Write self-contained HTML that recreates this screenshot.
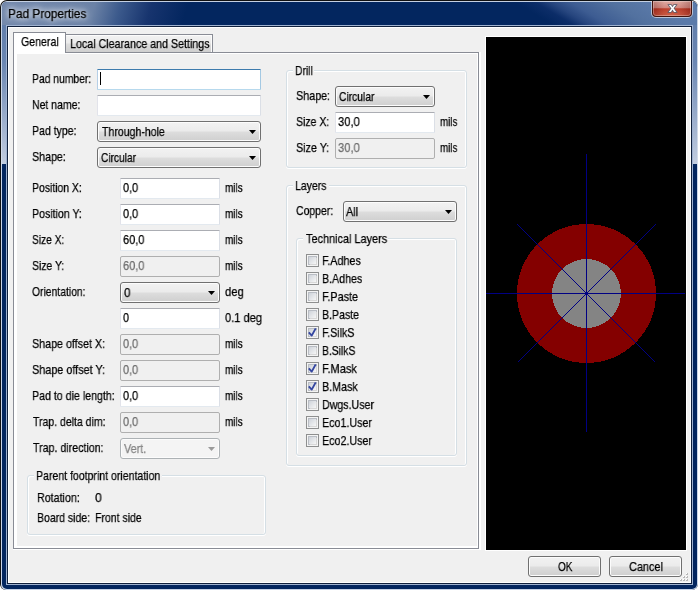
<!DOCTYPE html><html><head><meta charset="utf-8"><title>Pad Properties</title><style>
*{box-sizing:border-box;margin:0;padding:0}
html,body{width:699px;height:591px;overflow:hidden;background:#fff}
body{position:relative;font-family:"Liberation Sans",sans-serif;font-size:13px;color:#000}
.a{position:absolute}
.t{position:absolute;white-space:nowrap;line-height:15px;height:15px;transform-origin:0 0;will-change:transform;-webkit-text-stroke:0.25px}
.inp{position:absolute;height:21px;background:#fff;border:1px solid #abadb3;border-color:#abadb3 #dbdfe6 #e3e9ef #e2e3ea;border-radius:1px}
.inp.dis{background:#f0f0f0;border-color:#afafaf;border-radius:2px}
.inp.foc{border-color:#3d7bad #a4c9e3 #b7d9ed #b5cfe7}
.cmb{position:absolute;height:21px;border:1px solid #707070;border-radius:3px;background:linear-gradient(#f2f2f2 0,#ebebeb 48%,#dddddd 52%,#cfcfcf 100%);box-shadow:inset 0 0 0 1px #fcfcfc}
.cmb:after{content:"";position:absolute;right:4px;top:8px;width:7px;height:4px;background:#000;clip-path:polygon(0 0,100% 0,50% 100%)}
.cmb.dis{border-color:#adb2b5;background:#f4f4f4}
.cmb.dis:after{background:#9a9a9a}
.grp{position:absolute;border:1px solid #d5dfe5;border-radius:3px;box-shadow:inset 1px 1px 0 0 #fff,inset -1px 0 0 0 #fff,0 1px 0 0 #fff}
.gl{position:absolute;background:#f0f0f0;height:13px}
.cb{position:absolute;width:13px;height:13px;border:1px solid #8e8f8f;background:#f4f4f4;box-shadow:inset 0 0 0 1px #f4f4f4, inset 1px 1px 0 2px #b9bdc4, inset -1px -1px 0 2px #d8d8d8;}
.cb i{position:absolute;left:2px;top:2px;width:7px;height:7px;background:linear-gradient(135deg,#cfd3da,#f6f6f6)}
.btn{position:absolute;height:21px;border:1px solid #707070;border-radius:3px;background:linear-gradient(#f2f2f2 0,#ebebeb 48%,#dddddd 52%,#cfcfcf 100%);box-shadow:inset 0 0 0 1px #fcfcfc}
</style></head><body>
<div class="a" style="left:0;top:0;width:698px;height:590px;border-radius:7px 7px 6px 6px;background:#111"></div>
<div class="a" style="left:1px;top:1px;width:697px;height:589px;border-radius:6px 6px 6px 5px;background:linear-gradient(180deg,#c4d0e2 0,#d4dcea 164px,#c8d4e8 165px)"></div>
<div class="a" style="left:2px;top:2px;width:695px;height:587px;border-radius:5px;overflow:hidden;background:#03265f"><div class="a" style="left:0;top:0;width:695px;height:162px;background:linear-gradient(180deg,#5d7aa8 0,#6a86b2 60px,#c2cde0 162px)"></div><div class="a" style="left:0;top:0;width:695px;height:23px;background:linear-gradient(105deg,#7489ac 0,#6b82a6 90px,#3c5a8c 115px,#17346e 145px,#03265f 180px,#03265f 100%)"></div><div class="a" style="left:408px;top:0;width:400px;height:23px;transform-origin:0 0;transform:skewX(59deg);background:linear-gradient(90deg,rgba(3,38,95,0) 0,#03265f 40px,#03265f 105px,#0c2d68 125px,#26457e 140px,#3d5c92 160px,#52719f 200px,#5b7aa9 240px,#5b7aa9 100%)"></div></div>
<div class="t" style="left:8.1px;top:6px;transform:scaleX(0.9105);text-shadow:0 0 5px rgba(255,255,255,.9),0 0 9px rgba(255,255,255,.8),0 0 12px rgba(255,255,255,.6)">Pad Properties</div>
<div class="a" style="left:651px;top:1px;width:42px;height:17px;border-radius:0 0 5px 5px;background:rgba(255,255,255,.55)"></div>
<div class="a" style="left:652px;top:1px;width:40px;height:16px;border:1px solid #43120c;border-top:none;border-radius:0 0 4px 4px;background:radial-gradient(ellipse 60% 70% at 50% 100%,rgba(230,130,100,.55) 0,rgba(230,130,100,0) 100%),linear-gradient(90deg,rgba(80,10,5,.25) 0,rgba(80,10,5,0) 30%,rgba(80,10,5,0) 70%,rgba(80,10,5,.25) 100%),linear-gradient(#dfaaa2 0,#d08880 45%,#b53423 52%,#b43c2a 100%);box-shadow:inset 0 0 0 1px rgba(255,255,255,.3)"></div>
<div class="a" style="left:666.5px;top:-1.5px;width:11px;text-align:center;font-size:13px;font-weight:bold;line-height:18px;height:18px;color:#fff;-webkit-text-stroke:1.6px #5a5f6e;paint-order:stroke fill;will-change:transform;transform:scaleX(1.04)">x</div>
<div class="a" style="left:6px;top:25px;width:687px;height:560px;background:#9fb2d0"></div>
<div class="a" style="left:7px;top:26px;width:685px;height:558px;background:#10203c"></div>
<div class="a" style="left:8px;top:27px;width:683px;height:556px;background:#f0f0f0;border:1px solid #fff"></div>
<div class="a" style="left:13px;top:52px;width:468px;height:498px;background:#fff"></div>
<div class="a" style="left:13px;top:52px;width:466px;height:497px;border:1px solid #898c95;background:#fff"></div>
<div class="a" style="left:17px;top:54px;width:460px;height:492px;background:#f0f0f0"></div>
<div class="a" style="left:66px;top:34px;width:147px;height:18px;border:1px solid #898c95;border-left:none;border-bottom:none;background:linear-gradient(#f2f2f2 0,#ebebeb 48%,#dddddd 52%,#cfcfcf 100%);box-shadow:inset -1px 1px 0 0 #fcfcfc"></div>
<div class="t" style="left:69.9px;top:36px;transform:scaleX(0.8219);">Local Clearance and Settings</div>
<div class="a" style="left:13px;top:32px;width:53px;height:21px;border:1px solid #898c95;border-bottom:none;background:#fff"></div>
<div class="t" style="left:21.1px;top:34px;transform:scaleX(0.8151);">General</div>
<div class="t" style="left:32.2px;top:71px;transform:scaleX(0.7953);">Pad number:</div>
<div class="inp foc" style="left:97px;top:69px;width:164px"></div>
<div class="a" style="left:100px;top:72px;width:1px;height:13px;background:#000"></div>
<div class="t" style="left:32.2px;top:97px;transform:scaleX(0.8069);">Net name:</div>
<div class="inp " style="left:97px;top:95px;width:164px"></div>
<div class="t" style="left:32.2px;top:123px;transform:scaleX(0.8109);">Pad type:</div>
<div class="cmb " style="left:97px;top:121px;width:164px"></div>
<div class="t" style="left:102px;top:124px;transform:scaleX(0.8115);">Through-hole</div>
<div class="t" style="left:32.2px;top:149px;transform:scaleX(0.8203);">Shape:</div>
<div class="cmb " style="left:97px;top:147px;width:164px"></div>
<div class="t" style="left:101.25px;top:150px;transform:scaleX(0.7813);">Circular</div>
<div class="t" style="left:32px;top:180px;transform:scaleX(0.8012);">Position X:</div>
<div class="inp " style="left:120px;top:178px;width:100px"></div>
<div class="t" style="left:123.25px;top:180px;transform:scaleX(0.8436);">0,0</div>
<div class="t" style="left:224.9px;top:180px;transform:scaleX(0.7659);">mils</div>
<div class="t" style="left:32px;top:206px;transform:scaleX(0.8137);">Position Y:</div>
<div class="inp " style="left:120px;top:204px;width:100px"></div>
<div class="t" style="left:123.25px;top:206px;transform:scaleX(0.8436);">0,0</div>
<div class="t" style="left:224.9px;top:206px;transform:scaleX(0.7659);">mils</div>
<div class="t" style="left:32px;top:232px;transform:scaleX(0.7842);">Size X:</div>
<div class="inp " style="left:120px;top:230px;width:100px"></div>
<div class="t" style="left:123.25px;top:232px;transform:scaleX(0.8494);">60,0</div>
<div class="t" style="left:224.9px;top:232px;transform:scaleX(0.7659);">mils</div>
<div class="t" style="left:32px;top:258px;transform:scaleX(0.8028);">Size Y:</div>
<div class="inp dis" style="left:120px;top:256px;width:100px"></div>
<div class="t" style="left:123.25px;top:258px;transform:scaleX(0.8494);color:#6d6d6d;">60,0</div>
<div class="t" style="left:224.9px;top:258px;transform:scaleX(0.7659);">mils</div>
<div class="t" style="left:32px;top:284px;transform:scaleX(0.7961);">Orientation:</div>
<div class="cmb " style="left:120px;top:282px;width:100px"></div>
<div class="t" style="left:124px;top:285px;transform:scaleX(0.8985);">0</div>
<div class="t" style="left:224.9px;top:284px;transform:scaleX(0.8662);">deg</div>
<div class="inp " style="left:120px;top:308px;width:100px"></div>
<div class="t" style="left:123.25px;top:310px;transform:scaleX(0.8294);">0</div>
<div class="t" style="left:224.9px;top:310px;transform:scaleX(0.8507);">0.1 deg</div>
<div class="t" style="left:32px;top:336px;transform:scaleX(0.8233);">Shape offset X:</div>
<div class="inp dis" style="left:120px;top:334px;width:100px"></div>
<div class="t" style="left:123.25px;top:336px;transform:scaleX(0.8436);color:#6d6d6d;">0,0</div>
<div class="t" style="left:224.9px;top:336px;transform:scaleX(0.7659);">mils</div>
<div class="t" style="left:32px;top:362px;transform:scaleX(0.8322);">Shape offset Y:</div>
<div class="inp dis" style="left:120px;top:360px;width:100px"></div>
<div class="t" style="left:123.25px;top:362px;transform:scaleX(0.8436);color:#6d6d6d;">0,0</div>
<div class="t" style="left:224.9px;top:362px;transform:scaleX(0.7659);">mils</div>
<div class="t" style="left:32px;top:388px;transform:scaleX(0.8177);">Pad to die length:</div>
<div class="inp " style="left:120px;top:386px;width:100px"></div>
<div class="t" style="left:123.25px;top:388px;transform:scaleX(0.8436);">0,0</div>
<div class="t" style="left:224.9px;top:388px;transform:scaleX(0.7659);">mils</div>
<div class="t" style="left:32.5px;top:414px;transform:scaleX(0.8070);">Trap. delta dim:</div>
<div class="inp dis" style="left:120px;top:412px;width:100px"></div>
<div class="t" style="left:123.25px;top:414px;transform:scaleX(0.8436);color:#6d6d6d;">0,0</div>
<div class="t" style="left:224.9px;top:414px;transform:scaleX(0.7659);">mils</div>
<div class="t" style="left:32.5px;top:440px;transform:scaleX(0.8175);">Trap. direction:</div>
<div class="cmb dis" style="left:120px;top:438px;width:100px"></div>
<div class="t" style="left:123.75px;top:441px;transform:scaleX(0.8318);color:#838383;">Vert.</div>
<div class="grp" style="left:27px;top:475px;width:239px;height:60px"></div>
<div class="gl" style="left:34px;top:469px;width:128px"></div>
<div class="t" style="left:36.25px;top:468px;transform:scaleX(0.8109);">Parent footprint orientation</div>
<div class="t" style="left:37px;top:490px;transform:scaleX(0.8214);">Rotation:</div>
<div class="t" style="left:95px;top:490px;transform:scaleX(0.9330);">0</div>
<div class="t" style="left:37px;top:510px;transform:scaleX(0.8059);">Board side:</div>
<div class="t" style="left:95px;top:510px;transform:scaleX(0.8086);">Front side</div>
<div class="grp" style="left:286px;top:70px;width:181px;height:98px"></div>
<div class="gl" style="left:293px;top:64px;width:21px"></div>
<div class="t" style="left:295.3px;top:63px;transform:scaleX(0.7950);">Drill</div>
<div class="t" style="left:295.9px;top:88px;transform:scaleX(0.8276);">Shape:</div>
<div class="cmb " style="left:335px;top:86px;width:100px"></div>
<div class="t" style="left:339.3px;top:89px;transform:scaleX(0.7902);">Circular</div>
<div class="t" style="left:295.9px;top:114px;transform:scaleX(0.8085);">Size X:</div>
<div class="inp " style="left:335px;top:112px;width:100px"></div>
<div class="t" style="left:338.25px;top:114px;transform:scaleX(0.8632);">30,0</div>
<div class="t" style="left:440.1px;top:114px;transform:scaleX(0.7529);">mils</div>
<div class="t" style="left:295.9px;top:140px;transform:scaleX(0.8277);">Size Y:</div>
<div class="inp dis" style="left:335px;top:138px;width:100px"></div>
<div class="t" style="left:338.25px;top:140px;transform:scaleX(0.8632);color:#6d6d6d;">30,0</div>
<div class="t" style="left:440.1px;top:140px;transform:scaleX(0.7529);">mils</div>
<div class="grp" style="left:286px;top:185px;width:181px;height:281px"></div>
<div class="gl" style="left:293px;top:179px;width:36px"></div>
<div class="t" style="left:295.1px;top:178px;transform:scaleX(0.8045);">Layers</div>
<div class="t" style="left:295.9px;top:203px;transform:scaleX(0.8043);">Copper:</div>
<div class="cmb " style="left:343px;top:201px;width:114px"></div>
<div class="t" style="left:346.2px;top:204px;transform:scaleX(0.8372);">All</div>
<div class="grp" style="left:296px;top:238px;width:161px;height:218px"></div>
<div class="gl" style="left:303px;top:232px;width:85px"></div>
<div class="t" style="left:305.7px;top:231px;transform:scaleX(0.8386);">Technical Layers</div>
<div class="cb" style="left:306px;top:254px"><i></i></div>
<div class="t" style="left:322.4px;top:253px;transform:scaleX(0.8258);">F.Adhes</div>
<div class="cb" style="left:306px;top:272px"><i></i></div>
<div class="t" style="left:322.4px;top:271px;transform:scaleX(0.8178);">B.Adhes</div>
<div class="cb" style="left:306px;top:290px"><i></i></div>
<div class="t" style="left:322.4px;top:289px;transform:scaleX(0.8326);">F.Paste</div>
<div class="cb" style="left:306px;top:308px"><i></i></div>
<div class="t" style="left:322.4px;top:307px;transform:scaleX(0.8126);">B.Paste</div>
<div class="cb" style="left:306px;top:326px"><i></i><svg class="a" style="left:0;top:0" width="11" height="11" viewBox="0 0 11 11"><path d="M1.8 5.4 L4.7 8.6 L8.7 1.4" fill="none" stroke="#3547a0" stroke-width="1.9" stroke-linejoin="round"/></svg></div>
<div class="t" style="left:322.4px;top:325px;transform:scaleX(0.8154);">F.SilkS</div>
<div class="cb" style="left:306px;top:344px"><i></i></div>
<div class="t" style="left:322.4px;top:343px;transform:scaleX(0.7946);">B.SilkS</div>
<div class="cb" style="left:306px;top:362px"><i></i><svg class="a" style="left:0;top:0" width="11" height="11" viewBox="0 0 11 11"><path d="M1.8 5.4 L4.7 8.6 L8.7 1.4" fill="none" stroke="#3547a0" stroke-width="1.9" stroke-linejoin="round"/></svg></div>
<div class="t" style="left:322.4px;top:361px;transform:scaleX(0.8452);">F.Mask</div>
<div class="cb" style="left:306px;top:380px"><i></i><svg class="a" style="left:0;top:0" width="11" height="11" viewBox="0 0 11 11"><path d="M1.8 5.4 L4.7 8.6 L8.7 1.4" fill="none" stroke="#3547a0" stroke-width="1.9" stroke-linejoin="round"/></svg></div>
<div class="t" style="left:322.4px;top:379px;transform:scaleX(0.8260);">B.Mask</div>
<div class="cb" style="left:306px;top:398px"><i></i></div>
<div class="t" style="left:322.4px;top:397px;transform:scaleX(0.8179);">Dwgs.User</div>
<div class="cb" style="left:306px;top:416px"><i></i></div>
<div class="t" style="left:322.4px;top:415px;transform:scaleX(0.8220);">Eco1.User</div>
<div class="cb" style="left:306px;top:434px"><i></i></div>
<div class="t" style="left:322.4px;top:433px;transform:scaleX(0.8220);">Eco2.User</div>
<div class="a" style="left:485px;top:36px;width:201.5px;height:514.5px;background:#fff"></div>
<div class="a" style="left:486px;top:37px;width:199.5px;height:512.5px;background:#000"></div>
<svg class="a" style="left:486px;top:38px" width="199" height="511" viewBox="486 38 199 511" shape-rendering="crispEdges"><circle cx="586.5" cy="293.5" r="69.5" fill="#840000"/><circle cx="586.5" cy="293.5" r="34.5" fill="#848484"/><g stroke="#000084" stroke-width="1"><line x1="586.5" y1="154" x2="586.5" y2="432"/><line x1="486" y1="293.5" x2="685" y2="293.5"/><line x1="517" y1="224" x2="655" y2="362"/><line x1="518" y1="362" x2="656" y2="224"/></g></svg>
<div class="a" style="left:686px;top:573px;width:2px;height:2px;background:linear-gradient(135deg,#fff 0,#fff 50%,#b8b8b8 50%)"></div>
<div class="a" style="left:686px;top:576px;width:2px;height:2px;background:linear-gradient(135deg,#fff 0,#fff 50%,#b8b8b8 50%)"></div>
<div class="a" style="left:686px;top:579px;width:2px;height:2px;background:linear-gradient(135deg,#fff 0,#fff 50%,#b8b8b8 50%)"></div>
<div class="a" style="left:683px;top:576px;width:2px;height:2px;background:linear-gradient(135deg,#fff 0,#fff 50%,#b8b8b8 50%)"></div>
<div class="a" style="left:683px;top:579px;width:2px;height:2px;background:linear-gradient(135deg,#fff 0,#fff 50%,#b8b8b8 50%)"></div>
<div class="a" style="left:680px;top:579px;width:2px;height:2px;background:linear-gradient(135deg,#fff 0,#fff 50%,#b8b8b8 50%)"></div>
<div class="btn" style="left:528px;top:556px;width:73px"></div>
<div class="t" style="left:557.6px;top:559px;transform:scaleX(0.7714);">OK</div>
<div class="btn" style="left:609px;top:556px;width:73px"></div>
<div class="t" style="left:629.2px;top:559px;transform:scaleX(0.8402);">Cancel</div>
</body></html>
